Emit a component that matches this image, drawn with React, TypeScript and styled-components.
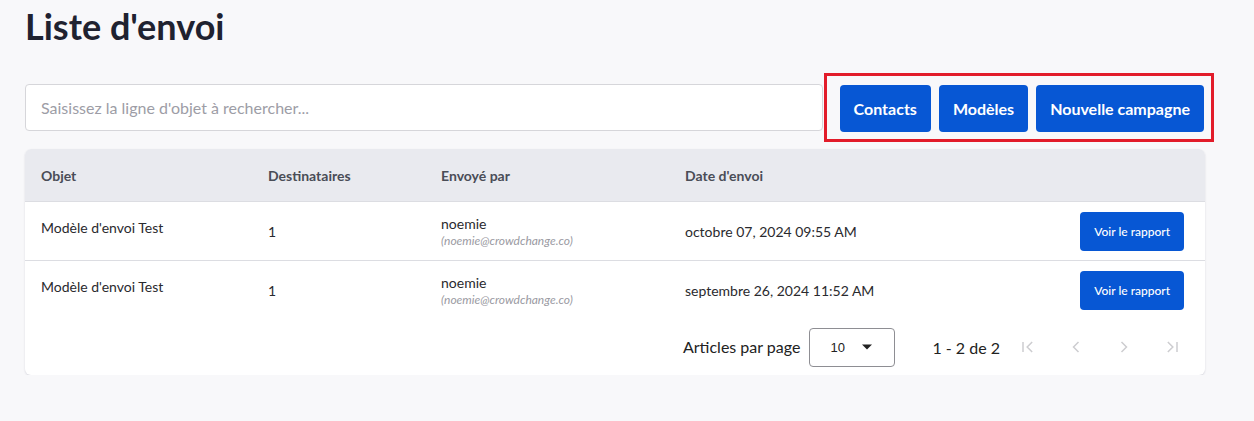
import React from 'react';
import styled, { createGlobalStyle } from 'styled-components';

const GlobalStyle = createGlobalStyle`
    html, body {
        margin: 0;
        padding: 0;
        background: #f8f8fa;
        font-family: Lato, 'Open Sans', sans-serif;
        color: #222;
    }
`;

const Page = styled.div`
    padding: 4px 49px 0 25px;
`;

const Title = styled.h1`
    margin: 0;
    font-size: 36px;
    line-height: 44px;
    font-weight: 700;
    color: #1f2230;
`;

const Toolbar = styled.div`
    display: flex;
    align-items: center;
    margin-top: 25px;
`;

const Search = styled.input`
    flex: 1;
    height: 47px;
    box-sizing: border-box;
    border: 1px solid #d6d6da;
    border-radius: 4px;
    background: #fff;
    padding: 0 15px;
    font-family: Lato, sans-serif;
    font-size: 16px;
    color: #333;
    outline: none;

    &::placeholder {
        color: #9d9da6;
    }
`;

const Highlight = styled.div`
    display: flex;
    gap: 8px;
    padding: 9px 7px 7px 13px;
    margin-left: 1px;
    border: 3px solid #e21c2a;
    margin-right: -9px;
`;

const PrimaryButton = styled.button<{ small?: boolean }>`
    border: none;
    border-radius: 4px;
    background: #0757d4;
    color: #fff;
    font-family: Lato, sans-serif;
    font-weight: ${props => (props.small ? 500 : 700)};
    font-size: ${props => (props.small ? '12px' : '16px')};
    height: ${props => (props.small ? '39px' : '47px')};
    padding: ${props => (props.small ? '0 14px' : '0 14px')};
    cursor: pointer;
`;

const Card = styled.div`
    margin-top: 7px;
    background: #fff;
    border-radius: 6px;
    box-shadow: 0 1px 2px rgba(30, 30, 60, 0.15);
    overflow: hidden;
`;

const Table = styled.table`
    width: 100%;
    border-collapse: collapse;
    font-size: 14px;
`;

const HeadCell = styled.th<{ width?: number }>`
    background: #e9eaef;
    text-align: left;
    font-weight: 700;
    color: #4a4d57;
    height: 52px;
    padding: 0;
    width: ${props => (props.width ? `${props.width}px` : 'auto')};

    &:first-child {
        padding-left: 16px;
    }
`;

const Row = styled.tr`
    border-top: 1px solid #dcdde2;
`;

const Cell = styled.td<{ lift?: boolean; right?: boolean }>`
    height: ${props => (props.lift ? '51px' : '58px')};
    padding: 0;
    vertical-align: middle;
    color: #2a2a2e;
    text-align: ${props => (props.right ? 'right' : 'left')};
    padding-bottom: ${props => (props.lift ? '7px' : '0')};

    &:first-child {
        padding-left: 16px;
    }
    &:last-child {
        padding-right: 21px;
    }
`;

const Sender = styled.div`
    line-height: 17px;
    padding-bottom: 1px;
`;

const Email = styled.div`
    font-size: 12px;
    font-style: italic;
    color: #9a9aa2;
    line-height: 15px;
`;

const Footer = styled.div`
    display: flex;
    align-items: center;
    justify-content: flex-end;
    height: 56px;
    padding-right: 9px;
    font-size: 16px;
    color: #222;
`;

const PerPage = styled.span`
    margin-right: 9px;
    padding-bottom: 2px;
`;

const Select = styled.div`
    display: flex;
    align-items: center;
    justify-content: space-between;
    width: 86px;
    height: 39px;
    box-sizing: border-box;
    border: 1px solid #8e8e93;
    border-radius: 4px;
    padding: 0 22px 0 20px;
    font-family: 'Liberation Sans', Arial, sans-serif;
    font-size: 13px;
    color: #222;
`;

const Range = styled.span`
    margin: 0 4px 0 37px;
`;

const PagerButton = styled.button`
    width: 48px;
    height: 40px;
    border: none;
    background: none;
    display: flex;
    align-items: center;
    justify-content: center;
    color: #cdcdd0;
    padding: 0;
`;

const Caret = () => (
    <svg width="10" height="6" viewBox="0 0 10 5">
        <path d="M0 0h10L5 5z" fill="#222" />
    </svg>
);

const PagerIcon = ({ kind }: { kind: 'first' | 'prev' | 'next' | 'last' }) => {
    const paths = {
        first: 'M6 6v12 M17 6l-6 6 6 6',
        prev: 'M15 6l-6 6 6 6',
        next: 'M9 6l6 6-6 6',
        last: 'M18 6v12 M7 6l6 6-6 6',
    };
    return (
        <svg width="20" height="20" viewBox="0 0 24 24" fill="none" stroke="currentColor" strokeWidth="1.8">
            <path d={paths[kind]} />
        </svg>
    );
};

const rows = [
    { subject: "Modèle d'envoi Test", count: 1, sender: 'noemie', email: 'noemie@crowdchange.co', date: 'octobre 07, 2024 09:55 AM' },
    { subject: "Modèle d'envoi Test", count: 1, sender: 'noemie', email: 'noemie@crowdchange.co', date: 'septembre 26, 2024 11:52 AM' },
];

const App = () => (
    <>
        <GlobalStyle />
        <Page>
            <Title>Liste d'envoi</Title>
            <Toolbar>
                <Search placeholder="Saisissez la ligne d'objet à rechercher..." />
                <Highlight>
                    <PrimaryButton>Contacts</PrimaryButton>
                    <PrimaryButton>Modèles</PrimaryButton>
                    <PrimaryButton>Nouvelle campagne</PrimaryButton>
                </Highlight>
            </Toolbar>
            <Card>
                <Table>
                    <thead>
                        <tr>
                            <HeadCell width={227}>Objet</HeadCell>
                            <HeadCell width={173}>Destinataires</HeadCell>
                            <HeadCell width={244}>Envoyé par</HeadCell>
                            <HeadCell>Date d'envoi</HeadCell>
                            <HeadCell />
                        </tr>
                    </thead>
                    <tbody>
                        {rows.map((row, i) => (
                            <Row key={i}>
                                <Cell lift>{row.subject}</Cell>
                                <Cell>{row.count}</Cell>
                                <Cell>
                                    <Sender>{row.sender}</Sender>
                                    <Email>({row.email})</Email>
                                </Cell>
                                <Cell>{row.date}</Cell>
                                <Cell right>
                                    <PrimaryButton small>Voir le rapport</PrimaryButton>
                                </Cell>
                            </Row>
                        ))}
                    </tbody>
                </Table>
                <Footer>
                    <PerPage>Articles par page</PerPage>
                    <Select>
                        <span>10</span>
                        <Caret />
                    </Select>
                    <Range>1 - 2 de 2</Range>
                    <PagerButton><PagerIcon kind="first" /></PagerButton>
                    <PagerButton><PagerIcon kind="prev" /></PagerButton>
                    <PagerButton><PagerIcon kind="next" /></PagerButton>
                    <PagerButton><PagerIcon kind="last" /></PagerButton>
                </Footer>
            </Card>
        </Page>
    </>
);

export default App;
